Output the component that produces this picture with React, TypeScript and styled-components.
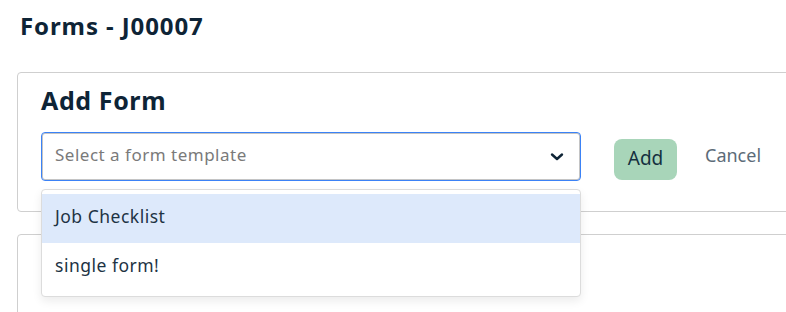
import React from "react";
import styled, { createGlobalStyle } from "styled-components";

const GlobalStyle = createGlobalStyle`
  * { box-sizing: border-box; }
  body {
    margin: 0;
    background: #ffffff;
    font-family: "Noto Sans", "Open Sans", sans-serif;
    color: #1d3344;
    overflow: hidden;
  }
`;

const Page = styled.div`
  padding: 10px 0 0 17px;
  width: 786px;
  height: 312px;
  overflow: hidden;
`;

const Title = styled.h1`
  margin: 0 0 0 3px;
  font-family: "Noto Sans", sans-serif;
  font-weight: 700;
  font-size: 24px;
  line-height: 32px;
  letter-spacing: 0.9px;
  color: #0e2436;
`;

const Card = styled.section<{ $top: number; $min: number }>`
  margin-top: ${(p) => p.$top}px;
  width: 800px;
  border: 1px solid #cfcfcf;
  border-radius: 4px;
  padding: 11px 23px 30px;
  min-height: ${(p) => p.$min}px;
`;

const CardTitle = styled.h2`
  margin: 0 0 16px;
  font-family: "Noto Sans", sans-serif;
  font-weight: 700;
  font-size: 25px;
  line-height: 32px;
  letter-spacing: 0.6px;
  color: #0e2436;
`;

const Row = styled.div`
  display: flex;
  align-items: center;
`;

const SelectWrap = styled.div`
  position: relative;
  width: 540px;
`;

const SelectBox = styled.div`
  height: 49px;
  border: 1px solid #3b82f6;
  box-shadow: inset 0 0 0 1px #c4c4c4;
  border-radius: 4px;
  display: flex;
  align-items: center;
  justify-content: space-between;
  padding: 0 16px 0 13px;
  background: #fff;
`;

const Placeholder = styled.span`
  font-size: 17px;
  letter-spacing: 0.5px;
  color: #7a7a7a;
  margin-bottom: 5px;
`;

const Menu = styled.ul`
  position: absolute;
  top: 57px;
  left: 0;
  width: 540px;
  margin: 0;
  padding: 4px 0;
  list-style: none;
  background: #fff;
  border: 1px solid #dcdcdc;
  border-radius: 4px;
  box-shadow: 0 4px 10px rgba(0, 0, 0, 0.08);
  z-index: 2;
`;

const Option = styled.li<{ $active?: boolean }>`
  height: 49px;
  display: flex;
  align-items: center;
  padding: 0 13px 6px;
  font-size: 17.5px;
  letter-spacing: 0.5px;
  color: #1d3344;
  background: ${(p) => (p.$active ? "#dde9fb" : "#fff")};
`;

const AddButton = styled.button`
  margin: 6px 0 0 33px;
  height: 41px;
  width: 63px;
  border: none;
  border-radius: 8px;
  background: #a8d5b9;
  color: #14303f;
  font-family: "Noto Sans", sans-serif;
  font-size: 19px;
  padding: 0 0 3px;
  cursor: pointer;
`;

const CancelButton = styled.button`
  margin-left: 20px;
  border: none;
  background: none;
  color: #5c6b78;
  font-family: "Noto Sans", sans-serif;
  font-size: 18px;
  padding: 0 8px 3px;
`;

const Chevron = () => (
  <svg width="14" height="10" viewBox="0 0 14 10" fill="none">
    <path d="M2 2.5 L7 7 L12 2.5" stroke="#0e2436" strokeWidth="2.4" strokeLinecap="round" strokeLinejoin="round" />
  </svg>
);

const templates = ["Job Checklist", "single form!"];

export default function App() {
  return (
    <>
      <GlobalStyle />
      <Page>
        <Title>Forms - J00007</Title>
        <Card $top={30} $min={139}>
          <CardTitle>Add Form</CardTitle>
          <Row>
            <SelectWrap>
              <SelectBox>
                <Placeholder>Select a form template</Placeholder>
                <Chevron />
              </SelectBox>
              <Menu>
                {templates.map((t, i) => (
                  <Option key={t} $active={i === 0}>
                    {t}
                  </Option>
                ))}
              </Menu>
            </SelectWrap>
            <AddButton>Add</AddButton>
            <CancelButton>Cancel</CancelButton>
          </Row>
        </Card>
        <Card $top={22} $min={120} />
      </Page>
    </>
  );
}
